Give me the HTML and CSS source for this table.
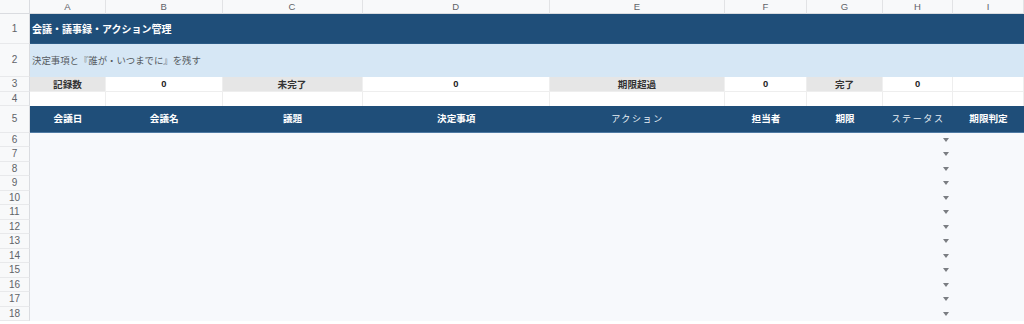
FILE: index.html
```html
<!DOCTYPE html>
<html lang="ja">
<head>
<meta charset="utf-8">
<title>会議・議事録・アクション管理</title>
<link rel="stylesheet" href="styles.css">
</head>
<body>
<div class="sheet">
  <div class="corner"></div>
  <div class="colh">A</div><div class="colh">B</div><div class="colh">C</div><div class="colh">D</div><div class="colh">E</div><div class="colh">F</div><div class="colh">G</div><div class="colh">H</div><div class="colh">I</div>

  <div class="rowh">1</div>
  <div class="title">会議・議事録・アクション管理</div>

  <div class="rowh">2</div>
  <div class="subtitle">決定事項と『誰が・いつまでに』を残す</div>

  <div class="rowh">3</div>
  <div class="label">記録数</div><div class="value">0</div>
  <div class="label">未完了</div><div class="value">0</div>
  <div class="label">期限超過</div><div class="value">0</div>
  <div class="label">完了</div><div class="value">0</div>
  <div class="value"></div>

  <div class="rowh">4</div>
  <div class="blank"></div><div class="blank"></div><div class="blank"></div><div class="blank"></div><div class="blank"></div><div class="blank"></div><div class="blank"></div><div class="blank"></div><div class="blank"></div>

  <div class="rowh">5</div>
  <div class="head">会議日</div><div class="head">会議名</div><div class="head">議題</div><div class="head">決定事項</div><div class="head kana">アクション</div><div class="head">担当者</div><div class="head">期限</div><div class="head kana">ステータス</div><div class="head">期限判定</div>
</div>
<div class="data" id="data"></div>
<script>
  var d = document.getElementById('data');
  var html = '';
  for (var r = 6; r <= 18; r++) {
    html += '<div class="rowh">' + r + '</div>';
    for (var c = 0; c < 9; c++) {
      html += '<div class="cell">' + (c === 7 ? '<span class="dd"></span>' : '') + '</div>';
    }
  }
  d.innerHTML = html;
</script>
</body>
</html>
```
FILE: styles.css
```css
html, body {
  margin: 0;
  padding: 0;
  background: #ffffff;
  overflow: hidden;
}
body {
  font-family: "Noto Sans CJK JP", "Liberation Sans", sans-serif;
  width: 1024px;
  height: 324px;
}
.sheet, .data {
  display: grid;
  grid-template-columns: 30px 76px 116.5px 140px 187.5px 175px 82px 76px 70px 71px;
}
.sheet {
  grid-template-rows: 14px 29.5px 33px 15px 14px 27px;
}
.data {
  grid-auto-rows: 14.5px;
}
.sheet > div, .data > div {
  box-sizing: border-box;
  display: flex;
  align-items: center;
  justify-content: center;
  overflow: hidden;
  white-space: nowrap;
}
.corner {
  background: #f8f9fa;
  border-right: 1px solid #dadce0;
  border-bottom: 1px solid #dadce0;
}
.colh {
  background: #f8f9fa;
  color: #5f6368;
  font-family: "Liberation Sans", Arial, sans-serif;
  font-size: 9.5px;
  border-right: 1px solid #e2e3e5;
  border-bottom: 1px solid #dadce0;
}
.rowh {
  background: #f8f9fa;
  color: #5f6368;
  font-family: "Liberation Sans", Arial, sans-serif;
  font-size: 10px;
  border-right: 1px solid #dadce0;
  border-bottom: 1px solid #e8e9eb;
}
.title {
  grid-column: 2 / span 9;
  background: #1f4e79;
  color: #ffffff;
  font-weight: 700;
  font-size: 10px;
  justify-content: flex-start !important;
  padding-left: 2px;
  border-bottom: 1px solid #2b5a85;
}
.subtitle {
  grid-column: 2 / span 9;
  background: #d6e7f5;
  color: #555a60;
  font-size: 9.4px;
  justify-content: flex-start !important;
  padding-left: 2px;
}
.label {
  background: #e6e6e6;
  color: #333333;
  font-weight: 700;
  font-size: 9.6px;
  border-right: 1px solid #f0f0f0;
  border-bottom: 1px solid #eeeeee;
}
.value {
  background: #ffffff;
  color: #222222;
  font-weight: 700;
  font-size: 9.4px;
  font-family: "Liberation Sans", Arial, sans-serif;
  border-right: 1px solid #eeeeee;
  border-bottom: 1px solid #eeeeee;
}
.blank {
  background: #ffffff;
  border-right: 1px solid #eeeeee;
}
.head {
  background: #1f4e79;
  color: #ffffff;
  font-weight: 700;
  font-size: 9.6px;
  border-bottom: 1px solid #4f7aa3;
  padding-bottom: 1px;
}
.head.kana {
  font-weight: 400;
  font-size: 9px;
  letter-spacing: 1.6px;
  color: #e8eef5;
}
.cell {
  background: #f7f9fc;
  position: relative;
}
.dd {
  position: absolute;
  right: 4px;
  top: 5px;
  width: 0;
  height: 0;
  border-left: 3px solid transparent;
  border-right: 3px solid transparent;
  border-top: 4px solid #7a7d82;
}
```
